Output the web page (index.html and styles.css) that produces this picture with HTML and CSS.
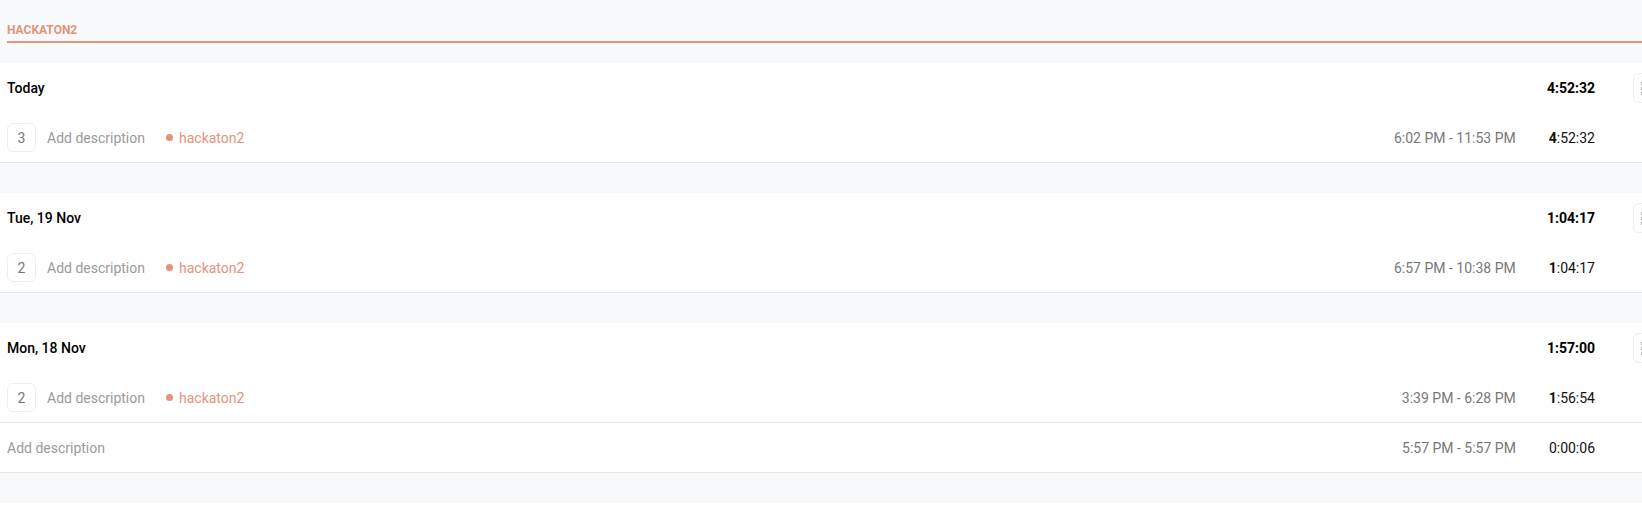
FILE: index.html
```html
<!DOCTYPE html>
<html>
<head>
<meta charset="utf-8">
<link rel="stylesheet" href="styles.css">
</head>
<body>
<div class="page">
  <div class="list">
    <div class="project">
      <div class="project-title">HACKATON2</div>
    </div>

    <div class="card">
      <div class="day-row">
        <div class="day-title">Today</div>
        <div class="day-total">4:52:32</div>
        <div class="actions"><button class="menu-btn"><span class="dots"><i></i><i></i><i></i></span></button></div>
      </div>
      <div class="entry">
        <div class="badge">3</div>
        <div class="desc">Add description</div>
        <div class="tag"><span class="dot"></span>hackaton2</div>
        <div class="range">6:02 PM - 11:53 PM</div>
        <div class="dur"><b>4</b>:52:32</div>
        <div class="actions"></div>
      </div>
    </div>

    <div class="card">
      <div class="day-row">
        <div class="day-title">Tue, 19 Nov</div>
        <div class="day-total">1:04:17</div>
        <div class="actions"><button class="menu-btn"><span class="dots"><i></i><i></i><i></i></span></button></div>
      </div>
      <div class="entry">
        <div class="badge">2</div>
        <div class="desc">Add description</div>
        <div class="tag"><span class="dot"></span>hackaton2</div>
        <div class="range">6:57 PM - 10:38 PM</div>
        <div class="dur"><b>1</b>:04:17</div>
        <div class="actions"></div>
      </div>
    </div>

    <div class="card">
      <div class="day-row">
        <div class="day-title">Mon, 18 Nov</div>
        <div class="day-total">1:57:00</div>
        <div class="actions"><button class="menu-btn"><span class="dots"><i></i><i></i><i></i></span></button></div>
      </div>
      <div class="entry">
        <div class="badge">2</div>
        <div class="desc">Add description</div>
        <div class="tag"><span class="dot"></span>hackaton2</div>
        <div class="range">3:39 PM - 6:28 PM</div>
        <div class="dur"><b>1</b>:56:54</div>
        <div class="actions"></div>
      </div>
      <div class="entry divided">
        <div class="desc plain">Add description</div>
        <div class="range">5:57 PM - 5:57 PM</div>
        <div class="dur">0:00:06</div>
        <div class="actions"></div>
      </div>
    </div>
  </div>
</div>
</body>
</html>
```

FILE: styles.css
```css
html, body {
  margin: 0;
  padding: 0;
  background: #ffffff;
  overflow: hidden;
}
body {
  font-family: Roboto, "Liberation Sans", Arial, sans-serif;
  color: #111;
}
.page {
  width: 1670px;
}
.list {
  background: #f8f9fb;
  padding: 22px 0 30px 0;
  display: flex;
  flex-direction: column;
  gap: 30px;
}
.project {
  padding-left: 7px;
  margin-bottom: -10px;
}
.project-title {
  font-size: 12px;
  line-height: 16px;
  font-weight: 700;
  color: #e3937c;
  padding-bottom: 3px;
  border-bottom: 2px solid #e3937c;
}
.card {
  background: #fff;
  border-bottom: 1px solid #e6e7ea;
}
.day-row {
  height: 50px;
  display: flex;
  align-items: center;
  padding: 0 7px 0 7px;
}
.day-title {
  flex: 1;
  font-size: 14px;
  font-weight: 500;
  color: #000;
}
.day-total {
  font-size: 14px;
  font-weight: 700;
  color: #000;
}
.actions {
  width: 30px;
  margin-left: 38px;
  flex: none;
  display: flex;
}
.menu-btn {
  width: 30px;
  height: 30px;
  border: 1px solid #eeeeee;
  border-radius: 6px;
  background: #fff;
  padding: 0;
  display: flex;
  align-items: center;
  justify-content: center;
}
.dots {
  display: flex;
  flex-direction: column;
  gap: 2px;
  margin-left: -12px;
}
.dots i {
  display: block;
  width: 3px;
  height: 3px;
  background: #b5b5b5;
}
.entry {
  height: 49px;
  display: flex;
  align-items: center;
  padding: 0 7px 0 7px;
  font-size: 14px;
}
.entry.divided {
  border-top: 1px solid #e6e7ea;
}
.badge {
  width: 27px;
  height: 27px;
  border: 1px solid #eeeeee;
  border-radius: 6px;
  display: flex;
  align-items: center;
  justify-content: center;
  color: #777;
  font-size: 14px;
  margin-right: 11px;
}
.desc {
  color: #9a9a9a;
}
.desc.plain {
  flex: 1;
}
.tag {
  flex: 1;
  display: flex;
  align-items: center;
  color: #e3937c;
  margin-left: 21px;
}
.dot {
  width: 7px;
  height: 7px;
  border-radius: 50%;
  background: #e3937c;
  margin-right: 6px;
}
.range {
  color: #777;
  margin-right: 33px;
}
.dur {
  color: #111;
}
.dur b {
  font-weight: 700;
}
```
